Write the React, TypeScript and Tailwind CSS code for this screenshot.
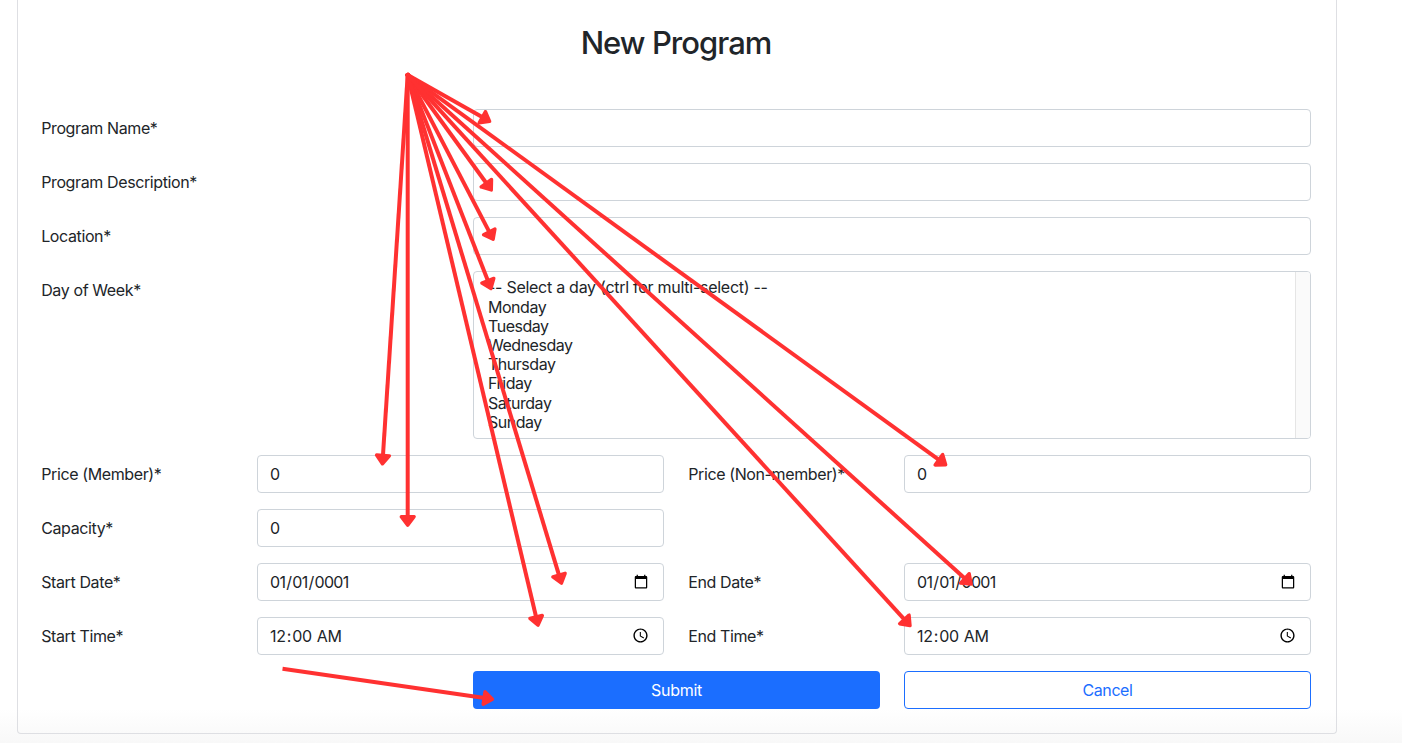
import React from "react";

const DAYS = ["Monday", "Tuesday", "Wednesday", "Thursday", "Friday", "Saturday", "Sunday"];

const FIELD =
  "block h-[38px] w-full rounded-[4px] border border-[#ced4da] bg-white text-base text-[#212529] outline-none";
const TEXT = "px-3";
const DATE = "pr-3 pl-[11px] tracking-[-0.044em]";
const TIME = "pr-[11.5px] pb-px pl-[11px] tracking-[-0.014em]";

function Label({ children, className = "" }: { children: string; className?: string }) {
  return (
    <label
      className={`whitespace-nowrap pt-[7px] pl-[0.2px] leading-6 tracking-[-0.024em] ${className}`}
    >
      {children}
    </label>
  );
}

function Arrow({ from, to }: { from: [number, number]; to: [number, number] }) {
  const angle = (Math.atan2(to[1] - from[1], to[0] - from[0]) * 180) / Math.PI;
  const length = Math.hypot(to[0] - from[0], to[1] - from[1]);
  return (
    <g transform={`translate(${from[0]} ${from[1]}) rotate(${angle})`}>
      <path d={`M-1.5 0H${length - 8}`} strokeWidth="4" />
      <path
        d={`M${length - 1.9} 0L${length - 10.3} -6.4V6.4Z`}
        strokeWidth="3.4"
        strokeLinejoin="round"
      />
    </g>
  );
}

const TARGETS: [number, number][] = [
  [491.3, 122.3],
  [492.4, 191.5],
  [494, 241],
  [491.6, 290.3],
  [382.3, 465.7],
  [407.7, 527],
  [538.5, 627],
  [562, 585],
  [947.2, 465.8],
  [972.5, 585.3],
  [911.3, 627],
];

export default function App() {
  return (
    <div
      className="relative h-[743px] w-[1402px] overflow-hidden bg-white bg-linear-to-b from-white from-[95.5%] to-[#f8f8f8] pl-[17px] text-base text-[#212529]"
      style={{ fontFamily: 'Inter, "Liberation Sans", sans-serif' }}
    >
      <div className="h-[734px] w-[1320px] rounded-b-[4px] border border-t-0 border-[#dedfe3] px-[23px]">
        <h1 className="pt-[24px] pr-[2px] text-center text-[31px] leading-[38px] font-medium tracking-[-0.031em]">
          New Program
        </h1>
        <form
          className="mt-[47px] grid grid-cols-[192px_192px_191px_192px_192px_191px] gap-x-6 gap-y-4"
          onSubmit={(e) => e.preventDefault()}
        >
          <Label className="col-span-2">Program Name*</Label>
          <input className={`${FIELD} ${TEXT} col-span-4`} />
          <Label className="col-span-2">Program Description*</Label>
          <input className={`${FIELD} ${TEXT} col-span-4`} />
          <Label className="col-span-2">Location*</Label>
          <input className={`${FIELD} ${TEXT} col-span-4`} />

          <Label className="col-span-2">Day of Week*</Label>
          <div className="col-span-4 flex h-[168px] justify-between overflow-hidden rounded-[4px] border border-[#ced4da] bg-white">
            <ul className="pt-1.5 pl-3.5 leading-[19.2px] tracking-[-0.03em]">
              <li className="pb-[0.4px] tracking-[-0.017em]">
                -- Select a day (ctrl for multi-select) --
              </li>
              {DAYS.map((day) => (
                <li key={day}>{day}</li>
              ))}
            </ul>
            <div className="w-[15px] border-l border-[#e5e5e5] bg-[#fafafa]" />
          </div>

          <Label>Price (Member)*</Label>
          <input className={`${FIELD} ${TEXT} col-span-2`} defaultValue="0" />
          <Label>Price (Non-member)*</Label>
          <input className={`${FIELD} ${TEXT} col-span-2`} defaultValue="0" />

          <Label>Capacity*</Label>
          <input className={`${FIELD} ${TEXT} col-span-2`} defaultValue="0" />
          <div className="col-span-3" />

          <Label>Start Date*</Label>
          <input type="date" className={`${FIELD} ${DATE} col-span-2`} defaultValue="0001-01-01" />
          <Label>End Date*</Label>
          <input type="date" className={`${FIELD} ${DATE} col-span-2`} defaultValue="0001-01-01" />

          <Label>Start Time*</Label>
          <input type="time" className={`${FIELD} ${TIME} col-span-2`} defaultValue="00:00" />
          <Label>End Time*</Label>
          <input type="time" className={`${FIELD} ${TIME} col-span-2`} defaultValue="00:00" />

          <button
            type="submit"
            className="col-span-2 col-start-3 h-[38px] rounded-[4px] bg-[#1b6eff] tracking-[-0.015em] text-white"
          >
            Submit
          </button>
          <button
            type="button"
            className="col-span-2 h-[38px] rounded-[4px] border border-[#1b6eff] bg-white tracking-[-0.025em] text-[#1b6eff]"
          >
            Cancel
          </button>
        </form>
      </div>

      <svg
        className="pointer-events-none absolute inset-0 fill-[#ff3131] stroke-[#ff3131]"
        width="1402"
        height="743"
        viewBox="0 0 1402 743"
      >
        {TARGETS.map((to) => (
          <Arrow key={to.join()} from={[407.7, 75]} to={to} />
        ))}
        <Arrow from={[284, 669]} to={[494.3, 699.5]} />
      </svg>
    </div>
  );
}
